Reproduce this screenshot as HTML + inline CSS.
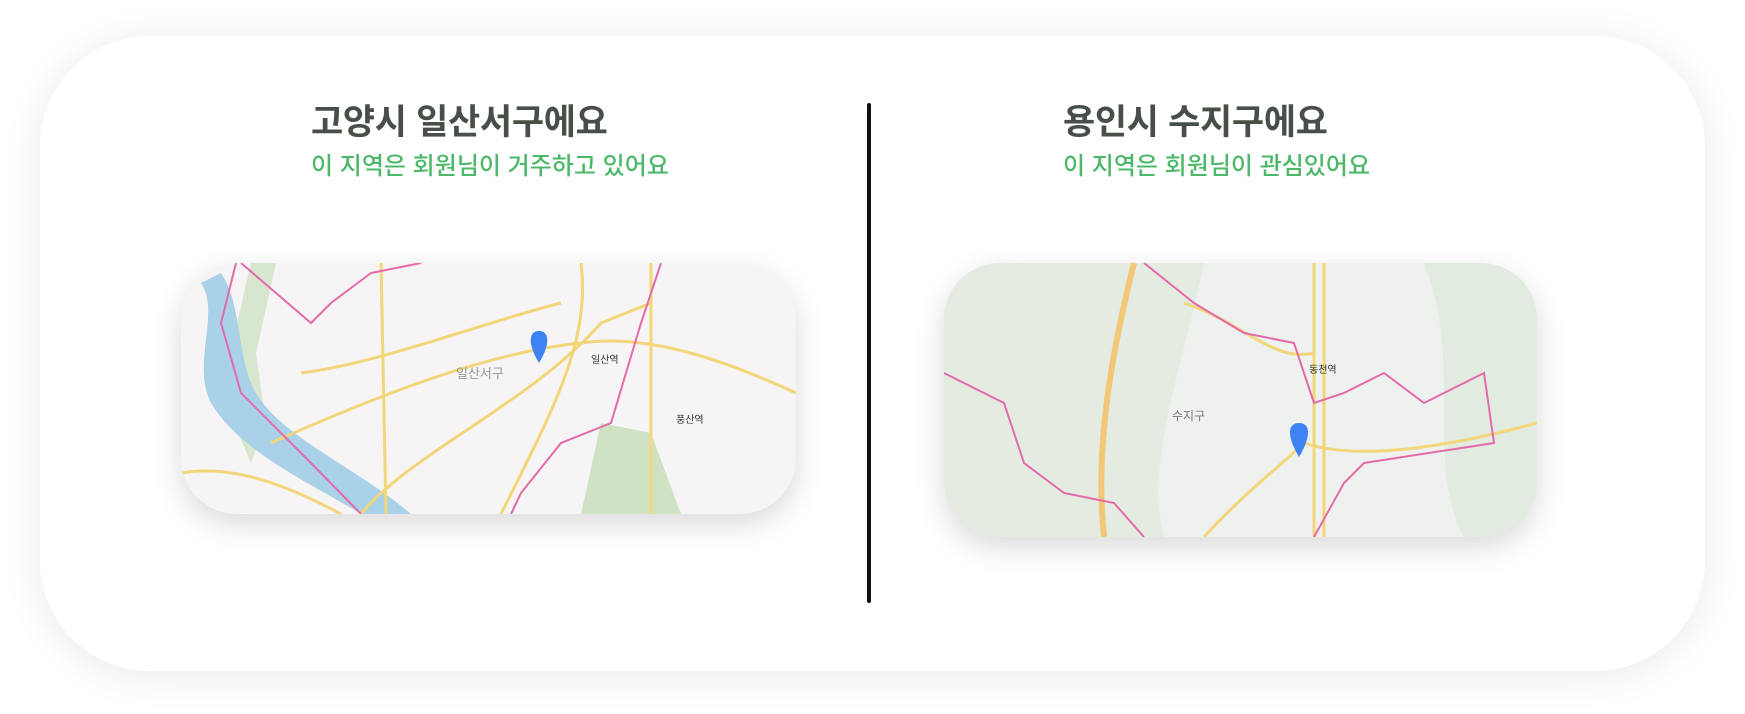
<!DOCTYPE html>
<html><head><meta charset="utf-8"><style>
body{margin:0;width:1745px;height:714px;background:#fff;position:relative;overflow:hidden;font-family:"Liberation Sans","Noto Sans CJK KR",sans-serif}
.card{position:absolute;left:40px;top:36px;width:1665px;height:635px;border-radius:110px;background:#fff;box-shadow:0 4px 40px rgba(0,0,0,0.09)}
.div{position:absolute;left:867px;top:103px;width:4px;height:500px;background:#111;border-radius:2px}
h1{position:absolute;margin:0;font-size:35px;font-weight:bold;color:#474f48;top:94px;letter-spacing:-0.3px}
h2{position:absolute;margin:0;font-size:24px;font-weight:500;color:#4db86a;top:146px}
.map{position:absolute;overflow:hidden;box-shadow:0 10px 30px rgba(0,0,0,0.15)}
</style></head><body>
<div class="card"></div>
<div class="div"></div>
<h1 style="left:311px">고양시 일산서구에요</h1>
<h2 style="left:311px">이 지역은 회원님이 거주하고 있어요</h2>
<h1 style="left:1063px">용인시 수지구에요</h1>
<h2 style="left:1063px">이 지역은 회원님이 관심있어요</h2>

<div class="map" style="left:181px;top:263px;width:615px;height:251px;border-radius:56px;background:#f6f4f4">
<svg width="615" height="251" viewBox="0 0 615 251">
<path d="M70 0 L95 0 L75 90 L85 160 L70 200 L40 130 Z" fill="#d7e6cf"/>
<path d="M20 20 C40 50 10 100 30 140 C60 190 130 220 180 251 L230 251 C170 200 90 170 70 120 C55 80 60 40 40 10 Z" fill="#a9d2e8"/>
<path d="M420 160 L470 170 L500 251 L400 251 Z" fill="#cfe3c4"/>
<g fill="none" stroke="#f3d67a" stroke-width="3">
<path d="M0 210 C60 200 120 230 160 251"/><path d="M180 251 C230 190 350 140 420 60 L470 40"/>
<path d="M90 180 C180 140 300 90 400 80 C470 70 550 100 615 130"/>
<path d="M200 0 L205 251"/><path d="M400 0 C410 80 370 150 320 251"/>
<path d="M470 0 L470 251"/><path d="M120 110 C200 100 300 60 380 40"/>
</g>
<g fill="none" stroke="#e46aa9" stroke-width="2">
<path d="M55 0 L40 60 L60 130 L130 200 L180 251"/><path d="M60 0 L130 60 L150 40 L190 10 L240 0"/>
<path d="M480 0 L460 60 L430 160 L380 180 L340 230 L330 251"/>
</g>
<path d="M358 68 C348 68 346 80 358 100 C370 80 368 68 358 68Z" fill="#3d83f4"/>
<text x="275" y="115" font-size="13" fill="#999">일산서구</text>
<text x="410" y="100" font-size="10" fill="#333">일산역</text>
<text x="495" y="160" font-size="10" fill="#333">풍산역</text>
</svg></div>

<div class="map" style="left:944px;top:263px;width:593px;height:274px;border-radius:56px;background:#eef1ee">
<svg width="593" height="274" viewBox="0 0 593 274">
<path d="M0 0 H260 C240 100 200 200 220 274 H0 Z" fill="#e4ece2"/>
<path d="M480 0 H593 V274 H520 C480 200 520 100 480 0Z" fill="#e2ebe0"/>
<g fill="none" stroke="#f2c777" stroke-width="6"><path d="M190 0 C170 80 150 180 160 274"/></g>
<g fill="none" stroke="#f3d67a" stroke-width="3">
<path d="M370 0 V274"/><path d="M380 0 V274"/><path d="M240 40 C300 60 330 100 370 90"/>
<path d="M360 180 C420 200 520 180 593 160"/><path d="M260 274 C300 230 340 200 360 180"/>
</g>
<g fill="none" stroke="#e46aa9" stroke-width="2">
<path d="M0 110 L60 140 L80 200 L120 230 L170 240 L200 274"/>
<path d="M200 0 L250 40 L300 70 L350 80 L370 140 L400 130 L440 110 L480 140 L540 110 L550 180 L420 200 L400 220 L370 274"/>
</g>
<path d="M355 160 C344 160 342 172 355 194 C368 172 366 160 355 160Z" fill="#3d83f4"/>
<text x="228" y="157" font-size="12" fill="#777">수지구</text>
<text x="365" y="110" font-size="10" fill="#333">동천역</text>
</svg></div>
</body></html>
